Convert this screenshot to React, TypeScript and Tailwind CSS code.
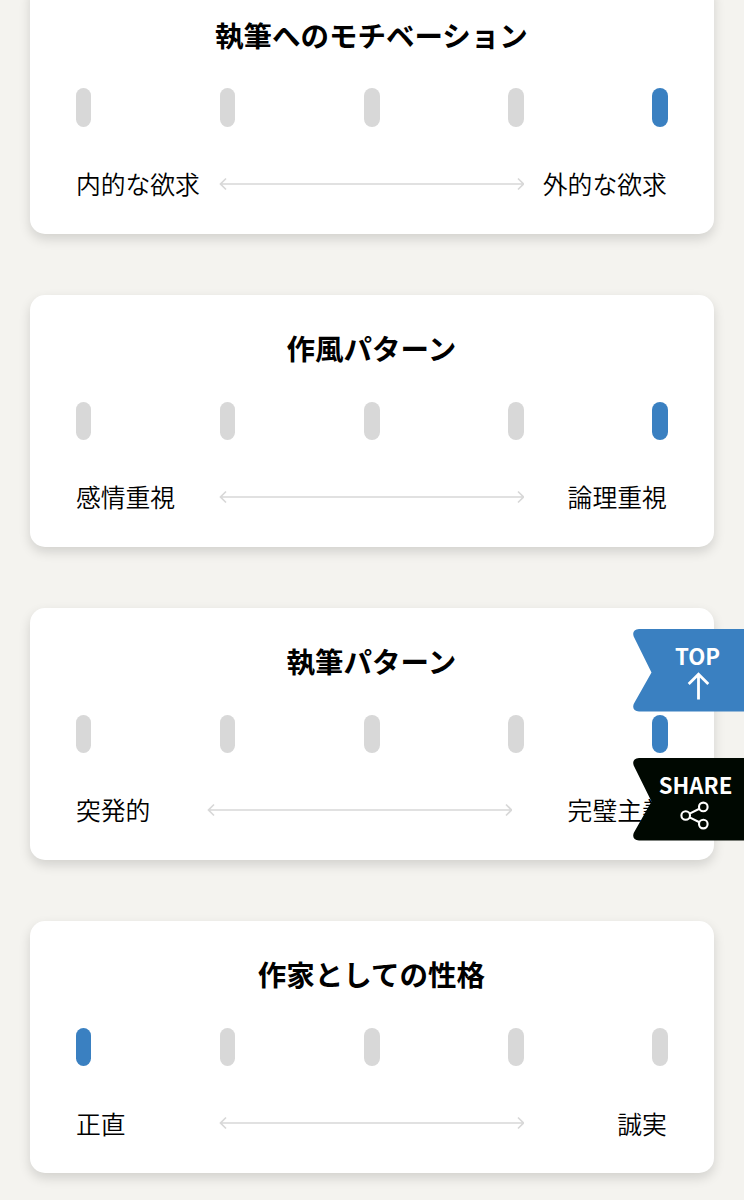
import type { ReactNode } from "react";

const traits = [
  { title: "執筆へのモチベーション", left: "内的な欲求", right: "外的な欲求", active: 4 },
  { title: "作風パターン", left: "感情重視", right: "論理重視", active: 4 },
  { title: "執筆パターン", left: "突発的", right: "完璧主義", active: 4 },
  { title: "作家としての性格", left: "正直", right: "誠実", active: 0 },
];

type Trait = (typeof traits)[number];

function RangeArrow() {
  return (
    <svg className="h-4 w-[305px] shrink-0" viewBox="0 0 305 16" fill="none" stroke="#d8d8d8" strokeWidth="1.7">
      <path d="M1.5 8H304.5M7 2.5L1.5 8l5.5 5.5M299 2.5L304.5 8l-5.5 5.5" />
    </svg>
  );
}

function TraitCard({ title, left, right, active }: Trait) {
  return (
    <section className="flex h-[252px] shrink-0 flex-col rounded-[15px] bg-white px-[45.8px] pt-[33px] shadow-[0_5px_12px_rgba(0,0,0,0.14)]">
      <h2 className="pr-px text-center text-[28.5px] leading-[40px] font-bold">{title}</h2>
      <div className="mt-[33.8px] flex justify-between">
        {[0, 1, 2, 3, 4].map((step) => (
          <span
            key={step}
            className={`h-[38.2px] w-[15.4px] rounded-full ${step === active ? "bg-[#3a80c1]" : "bg-[#d8d8d8]"}`}
          />
        ))}
      </div>
      <div className="mt-[37.3px] flex h-[40px] items-center justify-between text-[24.8px] leading-[40px] font-[350]">
        <span className="pb-[1.6px]">{left}</span>
        <RangeArrow />
        <span className="-ml-px pr-px pb-[1.6px]">{right}</span>
      </div>
    </section>
  );
}

function Ribbon({ label, color, children }: { label: ReactNode; color: string; children: ReactNode }) {
  return (
    <a className="relative block h-[83px] w-[111px] text-white">
      <svg className="absolute inset-0 h-full w-full" viewBox="0 0 111 83">
        <path
          d="M6 0H111V82.5H6Q-1.5 81.5 .7 75L18.5 43.5L.7 7.5Q-1.5 1 6 0Z"
          fill={color}
        />
        {children}
      </svg>
      <span className="relative flex justify-center pt-[11px] text-[22.2px] leading-[30px] font-bold">
        {label}
      </span>
    </a>
  );
}

export default function App() {
  return (
    <main className="relative h-[1200px] w-full overflow-hidden bg-[#f4f3ef] font-['Noto_Sans_CJK_JP',sans-serif] text-black">
      <div className="-mt-[18.4px] flex flex-col gap-[61.2px] pr-[30.4px] pl-[30.1px]">
        {traits.map((trait) => (
          <TraitCard key={trait.title} {...trait} />
        ))}
      </div>
      <nav className="absolute top-[629px] right-0 flex flex-col gap-[45.5px]">
        <Ribbon label={<span className="pl-[18px]">TOP</span>} color="#3a80c1">
          <path d="M65.5 70.5V45.5M55.7 55L65.5 45.2L75.3 55" fill="none" stroke="white" strokeWidth="2.8" />
        </Ribbon>
        <Ribbon label={<span className="pl-[14px]">SHARE</span>} color="#000801">
          <g fill="none" stroke="white" strokeWidth="2.1">
            <circle cx="52.7" cy="57.5" r="4.3" />
            <circle cx="70.3" cy="48.9" r="4.3" />
            <circle cx="70.3" cy="66.1" r="4.3" />
            <path d="M56.6 55.6L66.4 50.8M56.6 59.4L66.4 64.2" />
          </g>
        </Ribbon>
      </nav>
    </main>
  );
}
